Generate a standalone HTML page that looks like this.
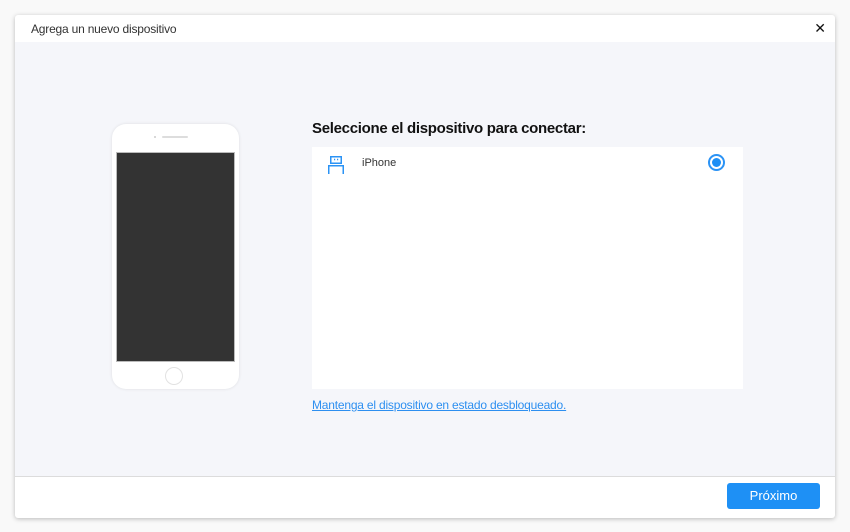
<!DOCTYPE html>
<html><head><meta charset="utf-8"><style>
body{margin:0;width:850px;height:532px;background:#f9f9f9;font-family:"Liberation Sans",sans-serif;position:relative;overflow:hidden}
.dlg{position:absolute;left:15px;top:15px;width:820px;height:503px;background:#fff;box-shadow:0 1px 5px rgba(0,0,0,.25);border-radius:3px}
.title{position:absolute;left:16px;top:7px;font-size:12px;color:#333;letter-spacing:-0.2px}
.x{position:absolute;right:9px;top:5px;font-size:14px;color:#111}
.body{position:absolute;left:0;top:27px;width:820px;height:434px;background:#f5f6fa;border-bottom:1px solid #dcdcdc}
.phone{position:absolute;left:97px;top:82px;width:127px;height:265px;background:#fff;border-radius:14px;box-shadow:0 0 3px rgba(0,0,0,.1)}
.scr{position:absolute;left:4px;top:28px;width:119px;height:210px;background:#333;border:1px solid #bbb;box-sizing:border-box}
.spk{position:absolute;left:50px;top:12px;width:26px;height:2px;background:#ddd;border-radius:1px}
.cam{position:absolute;left:42px;top:12px;width:2px;height:2px;background:#ccc;border-radius:1px}
.home{position:absolute;left:53px;top:243px;width:18px;height:18px;border:1px solid #e2e2e2;border-radius:50%;box-sizing:border-box}
h2{position:absolute;left:297px;top:78px;margin:0;font-size:15px;font-weight:bold;color:#111;letter-spacing:-0.3px}
.list{position:absolute;left:297px;top:105px;width:431px;height:242px;background:#fff}
.iph{position:absolute;left:50px;top:10px;font-size:11px;color:#333}
.radio{position:absolute;left:396px;top:7px;width:13px;height:13px;border:2px solid #2b93f5;border-radius:50%}
.radio:after{content:"";position:absolute;left:2px;top:2px;width:9px;height:9px;background:#1e8ff5;border-radius:50%}
.link{position:absolute;left:297px;top:356px;font-size:12px;color:#2d8ff0;text-decoration:underline;letter-spacing:-0.2px}
.btn{position:absolute;left:712px;top:468px;width:93px;height:26px;background:#1e90f5;border-radius:3px;color:#fff;font-size:13px;text-align:center;line-height:26px}
</style></head><body>
<div class="dlg">
<div class="title">Agrega un nuevo dispositivo</div>
<div class="x">✕</div>
<div class="body">
<div class="phone"><div class="cam"></div><div class="spk"></div><div class="scr"></div><div class="home"></div></div>
<h2>Seleccione el dispositivo para conectar:</h2>
<div class="list">
<svg style="position:absolute;left:15px;top:8px" width="20" height="20" viewBox="0 0 20 20" fill="none" stroke="#2b93f5" stroke-width="1.5"><rect x="3.75" y="1.75" width="10.5" height="6.5"/><path d="M7 4.5h1.2M10 4.5h1.2"/><path d="M1.75 19V10.75h14.5V19"/></svg>
<div class="iph">iPhone</div>
<div class="radio"></div>
</div>
<div class="link">Mantenga el dispositivo en estado desbloqueado.</div>
</div>
<div class="btn">Próximo</div>
</div>
</body></html>
